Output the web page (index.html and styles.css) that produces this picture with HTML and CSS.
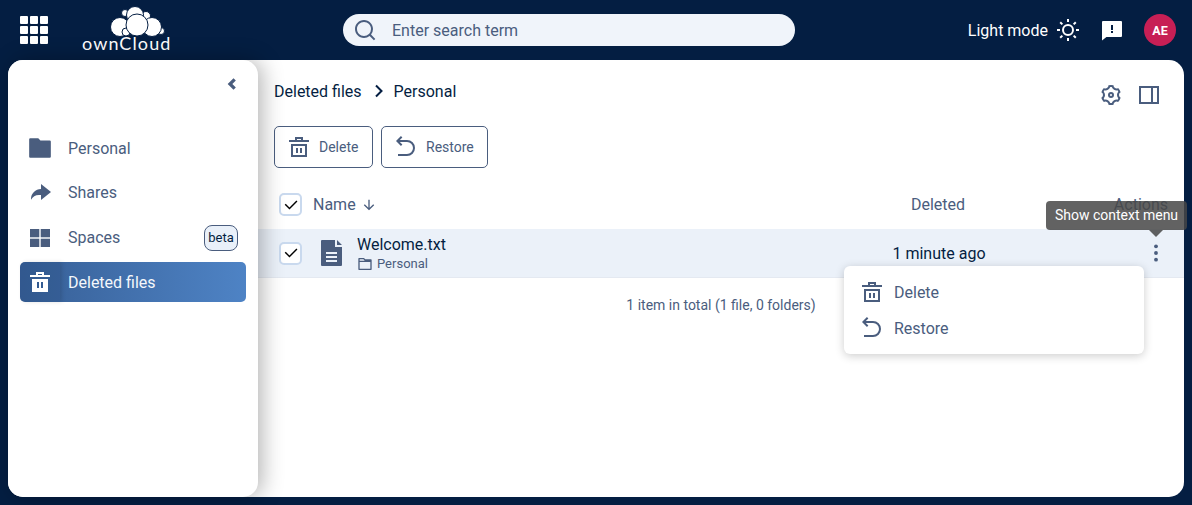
FILE: index.html
```html
<!DOCTYPE html>
<html>

<head>
	<meta name="viewport" content="width=device-width, initial-scale=1" />
	<title>Deleted files - ownCloud</title>
	<link rel="stylesheet" href="styles.css">
</head>

<body>
	<svg class="defs" width="0" height="0">
		<symbol id="trash" viewBox="0 0 20 20">
			<path fill-rule="evenodd" d="M6 0h8v3h6v2H0V3h6zM8 2v1h4V2zM2 7h16v13H2zm2 2v9h12V9zm3 2h2v5H7zm4 0h2v5h-2z"/>
		</symbol>
		<symbol id="restore" viewBox="0 0 24 24">
			<path d="M5.828 7l2.536 2.536L6.95 10.95 2 6l4.95-4.95 1.414 1.414L5.828 5H13a8 8 0 1 1 0 16H4v-2h9a6 6 0 1 0 0-12H5.828z"/>
		</symbol>
		<symbol id="check" viewBox="0 0 24 24">
			<path d="M10 15.17l9.2-9.2 1.4 1.4L10 18l-6.4-6.4 1.4-1.4z"/>
		</symbol>
	</svg>

	<header class="topbar">
		<button class="apps" aria-label="Applications">
			<svg width="28" height="28" viewBox="0 0 28 28">
				<rect x="0" y="0" width="8" height="8" rx="1"/><rect x="10" y="0" width="8" height="8" rx="1"/><rect x="20" y="0" width="8" height="8" rx="1"/>
				<rect x="0" y="10" width="8" height="8" rx="1"/><rect x="10" y="10" width="8" height="8" rx="1"/><rect x="20" y="10" width="8" height="8" rx="1"/>
				<rect x="0" y="20" width="8" height="8" rx="1"/><rect x="10" y="20" width="8" height="8" rx="1"/><rect x="20" y="20" width="8" height="8" rx="1"/>
			</svg>
		</button>
		<a class="logo" href="#">
			<svg class="cloud" width="58" height="32" viewBox="0 0 58 32">
				<g fill="#fff" stroke="#041e42" stroke-width="1">
					<circle cx="16" cy="7" r="3.5"/>
					<circle cx="37" cy="10" r="4.5"/>
					<circle cx="52" cy="25" r="3.5"/>
					<circle cx="26" cy="9" r="8.5"/>
					<circle cx="11" cy="21" r="9.5"/>
					<circle cx="43" cy="21" r="9.5"/>
					<circle cx="17" cy="26" r="4"/>
					<circle cx="28" cy="19" r="11"/>
				</g>
			</svg>
			<span class="wordmark">ownCloud</span>
		</a>
		<div class="search">
			<svg width="24" height="24" viewBox="0 0 24 24"><path d="M18.031 16.617l4.283 4.282-1.415 1.415-4.282-4.283A8.96 8.96 0 0 1 11 20c-4.968 0-9-4.032-9-9s4.032-9 9-9 9 4.032 9 9a8.96 8.96 0 0 1-1.969 5.617zm-2.006-.742A6.977 6.977 0 0 0 18 11c0-3.868-3.133-7-7-7-3.868 0-7 3.132-7 7 0 3.867 3.132 7 7 7a6.977 6.977 0 0 0 4.875-1.975l.15-.15z"/></svg>
			<span>Enter search term</span>
		</div>
		<div class="top-right">
			<span class="mode">Light mode</span>
			<svg class="sun" width="24" height="24" viewBox="0 0 24 24"><path d="M12 18a6 6 0 1 1 0-12 6 6 0 0 1 0 12zm0-2a4 4 0 1 0 0-8 4 4 0 0 0 0 8zM11 1h2v3h-2V1zm0 19h2v3h-2v-3zM3.515 4.929l1.414-1.414L7.05 5.636 5.636 7.05 3.515 4.93zM16.95 18.364l1.414-1.414 2.121 2.121-1.414 1.414-2.121-2.121zm2.121-14.85l1.414 1.415-2.121 2.121-1.414-1.414 2.121-2.121zM5.636 16.95l1.414 1.414-2.121 2.121-1.414-1.414 2.121-2.121zM23 11v2h-3v-2h3zM4 11v2H1v-2h3z"/></svg>
			<svg class="feedback" width="24" height="24" viewBox="0 0 24 24"><path d="M6.455 19L2 22.5V4a1 1 0 0 1 1-1h18a1 1 0 0 1 1 1v14a1 1 0 0 1-1 1H6.455zM11 13v2h2v-2h-2zm0-6v5h2V7h-2z"/></svg>
			<span class="avatar">AE</span>
		</div>
	</header>

	<div class="frame">
		<nav class="sidebar">
			<button class="collapse" aria-label="Collapse">
				<svg width="20" height="20" viewBox="0 0 24 24"><path d="M8 12l7-7 2.8 2.8L13.6 12l4.2 4.2L15 19z"/></svg>
			</button>
			<ul class="nav">
				<li class="nav-item">
					<span class="nav-icon"><svg width="26" height="26" viewBox="0 0 24 24"><path d="M12.414 5H21a1 1 0 0 1 1 1v14a1 1 0 0 1-1 1H3a1 1 0 0 1-1-1V4a1 1 0 0 1 1-1h7.414l2 2z"/></svg></span>
					Personal
				</li>
				<li class="nav-item">
					<span class="nav-icon"><svg width="24" height="24" viewBox="0 0 24 24"><path d="M13 14h-2a8.999 8.999 0 0 0-7.968 4.81A10.136 10.136 0 0 1 3 18C3 12.477 7.477 8 13 8V3l10 8-10 8v-5z"/></svg></span>
					Shares
				</li>
				<li class="nav-item">
					<span class="nav-icon"><svg width="20" height="18" viewBox="0 0 20 18"><rect width="9.3" height="8.3"/><rect x="10.7" width="9.3" height="8.3"/><rect y="9.7" width="9.3" height="8.3"/><rect x="10.7" y="9.7" width="9.3" height="8.3"/></svg></span>
					Spaces
					<span class="beta">beta</span>
				</li>
				<li class="nav-item active">
					<span class="nav-icon"><svg width="20" height="20" viewBox="0 0 20 20"><path fill-rule="evenodd" d="M6 0h8v3h6v2H0V3h6zM8 2v1h4V2zM2 7h16v13H2zm5 3v6h2v-6zm4 0v6h2v-6z"/></svg></span>
					Deleted files
				</li>
			</ul>
		</nav>

		<main class="main">
			<div class="page-head">
				<div class="crumbs">
					<span>Deleted files</span>
					<svg class="crumb-sep" width="12" height="14" viewBox="0 0 12 14"><path d="M2 1.5L7.5 7 2 12.5" fill="none" stroke="currentColor" stroke-width="2"/></svg>
					<span>Personal</span>
				</div>
				<div class="view-tools">
					<svg width="24" height="24" viewBox="0 0 24 24"><path d="M3.34 17a10.018 10.018 0 0 1-.978-2.326 3 3 0 0 0 .002-5.347A9.99 9.99 0 0 1 4.865 4.99a3 3 0 0 0 4.631-2.674 9.99 9.99 0 0 1 5.007.002 3 3 0 0 0 4.632 2.672c.579.59 1.093 1.261 1.525 2.01.433.749.757 1.53.978 2.326a3 3 0 0 0-.002 5.347 9.99 9.99 0 0 1-2.501 4.337 3 3 0 0 0-4.631 2.674 9.99 9.99 0 0 1-5.007-.002 3 3 0 0 0-4.632-2.672A10.018 10.018 0 0 1 3.34 17zm5.66.196a4.993 4.993 0 0 1 2.25 2.77c.499.047 1 .048 1.499.001A4.993 4.993 0 0 1 15 17.197a4.993 4.993 0 0 1 3.525-.565c.29-.408.54-.843.748-1.298A4.993 4.993 0 0 1 18 12c0-1.26.47-2.437 1.273-3.334a8.126 8.126 0 0 0-.75-1.298A4.993 4.993 0 0 1 15 6.804a4.993 4.993 0 0 1-2.25-2.77c-.499-.047-1-.048-1.499-.001A4.993 4.993 0 0 1 9 6.803a4.993 4.993 0 0 1-3.525.565 7.99 7.99 0 0 0-.748 1.298A4.993 4.993 0 0 1 6 12c0 1.26-.47 2.437-1.273 3.334a8.126 8.126 0 0 0 .75 1.298A4.993 4.993 0 0 1 9 17.196zM12 15a3 3 0 1 1 0-6 3 3 0 0 1 0 6zm0-2a1 1 0 1 0 0-2 1 1 0 0 0 0 2z"/></svg>
					<svg width="24" height="24" viewBox="0 0 24 24"><path fill-rule="evenodd" d="M2 3h20v18H2zm2 2v14h10V5zm12 0v14h4V5z"/></svg>
				</div>
			</div>

			<div class="bulk">
				<button class="btn"><svg width="20" height="20"><use href="#trash"/></svg>Delete</button>
				<button class="btn"><svg width="24" height="24"><use href="#restore"/></svg>Restore</button>
			</div>

			<div class="row table-head">
				<span class="name-cell">
					<span class="check"><svg width="18" height="18"><use href="#check"/></svg></span>
					<span class="sort">Name <svg width="16" height="16" viewBox="0 0 24 24"><path d="M13 16.172l5.364-5.364 1.414 1.414L12 20l-7.778-7.778 1.414-1.414L11 16.172V4h2z"/></svg></span>
				</span>
				<span class="deleted-cell">Deleted</span>
				<span class="actions-cell">Actions</span>
			</div>

			<div class="row file-row">
				<span class="name-cell">
					<span class="check"><svg width="18" height="18"><use href="#check"/></svg></span>
					<svg class="file-icon" width="21" height="26" viewBox="0 0 21 26"><path fill-rule="evenodd" d="M1 0h13v7h7v18a1 1 0 0 1-1 1H1a1 1 0 0 1-1-1V1a1 1 0 0 1 1-1zm15 0l5 5h-5zM5 12v2h11v-2zm0 4v2h11v-2zm0 4v2h11v-2z"/></svg>
					<span class="file-text">
						<span class="file-name">Welcome.txt</span>
						<span class="file-path">
							<svg width="16" height="16" viewBox="0 0 24 24"><path d="M4 5v14h16V9H4V7h7.586l-2-2H4zm8.414 0H21a1 1 0 0 1 1 1v14a1 1 0 0 1-1 1H3a1 1 0 0 1-1-1V4a1 1 0 0 1 1-1h7.414l2 2z"/></svg>
							Personal
						</span>
					</span>
				</span>
				<span class="deleted-cell time">1 minute ago</span>
				<span class="actions-cell">
					<svg class="kebab" width="24" height="24" viewBox="0 0 24 24"><circle cx="12" cy="4" r="2.3"/><circle cx="12" cy="12" r="2.3"/><circle cx="12" cy="20" r="2.3"/></svg>
				</span>
			</div>

			<p class="total">1 item in total (1 file, 0 folders)</p>

			<div class="tooltip">Show context menu</div>

			<ul class="menu">
				<li><svg width="20" height="20"><use href="#trash"/></svg>Delete</li>
				<li><svg width="24" height="24"><use href="#restore"/></svg>Restore</li>
			</ul>
		</main>
	</div>
</body>

</html>
```

FILE: styles.css
```css
* {
	box-sizing: border-box;
}

html,
body {
	height: 100%;
	margin: 0;
}

body {
	display: flex;
	flex-direction: column;
	background: #041e42;
	color: #041e42;
	font-family: Roboto, "Liberation Sans", sans-serif;
	font-size: 16px;
	overflow: hidden;
}

svg {
	fill: currentColor;
	flex: none;
}

button {
	border: 0;
	padding: 0;
	background: none;
	font: inherit;
	color: inherit;
}

ul {
	list-style: none;
	margin: 0;
	padding: 0;
}

.defs {
	position: absolute;
}

/* top bar */
.topbar {
	display: flex;
	align-items: center;
	flex: none;
	height: 60px;
	padding: 0 16px 0 20px;
	color: #fff;
}

.apps {
	display: flex;
	margin-right: 34px;
}

.apps svg {
	fill: #fff;
}

.logo {
	display: flex;
	flex-direction: column;
	align-self: flex-start;
	width: 89px;
	margin-top: 6px;
	color: #fff;
	text-decoration: none;
}

.cloud {
	margin-left: 27px;
}

.wordmark {
	margin-top: -2px;
	font-family: Lato, sans-serif;
	font-weight: 400;
	font-size: 18px;
	line-height: 14px;
	letter-spacing: 1.1px;
	white-space: nowrap;
}

.search {
	display: flex;
	align-items: center;
	gap: 15px;
	width: 452px;
	height: 32px;
	margin-left: 172px;
	padding-left: 10px;
	border-radius: 16px;
	background: #f0f4fa;
	color: #4a5d7e;
}

.top-right {
	display: flex;
	align-items: center;
	margin-left: auto;
}

.sun {
	margin-left: 8px;
}

.feedback {
	margin-left: 20px;
}

.avatar {
	display: flex;
	align-items: center;
	justify-content: center;
	width: 32px;
	height: 32px;
	margin-left: 20px;
	border-radius: 50%;
	background: #c71f55;
	font-size: 12.5px;
	font-weight: 700;
}

/* page frame */
.frame {
	display: flex;
	flex: 1;
	min-height: 0;
	margin: 0 8px 8px;
	border-radius: 15px;
	background: #fff;
}

.sidebar {
	position: relative;
	z-index: 1;
	flex: none;
	width: 250px;
	padding: 14px 12px 0;
	border-radius: 15px;
	background: #fff;
	color: #4a5d7e;
	box-shadow: 4px 0 22px rgba(0, 0, 0, 0.3);
}

.collapse {
	display: block;
	height: 24px;
	margin-left: 201px;
}

.nav {
	display: flex;
	flex-direction: column;
	gap: 4.8px;
	margin-top: 30px;
}

.nav-item {
	display: flex;
	align-items: center;
	height: 40px;
	padding-right: 8px;
	border-radius: 5px;
}

.nav-icon {
	display: flex;
	align-items: center;
	justify-content: center;
	flex: none;
	width: 40px;
	height: 40px;
	margin-right: 8px;
	border-radius: 5px 0 0 5px;
}

.beta {
	margin-left: auto;
	height: 26px;
	width: 34px;
	border: 1px solid #4a5d7e;
	border-radius: 8px;
	background: #e9f0f9;
	color: #041e42;
	font-size: 13px;
	line-height: 24px;
	text-align: center;
}

.active {
	background: linear-gradient(90deg, #375f96, #4e83c5);
	color: #f4f7fb;
}

.active .nav-icon {
	background: rgba(30, 60, 110, 0.18);
	box-shadow: 2px 0 4px rgba(0, 0, 0, 0.12);
	color: #fff;
}

/* main column */
.main {
	position: relative;
	flex: 1;
	min-width: 0;
}

.page-head {
	display: flex;
	justify-content: space-between;
	height: 66px;
	padding: 19px 23px 0 16px;
}

.crumbs {
	display: flex;
	align-items: center;
	height: 24px;
}

.crumb-sep {
	margin: 0 8px 0 12px;
}

.view-tools {
	display: flex;
	gap: 14px;
	margin-top: 4px;
	color: #4a5d7e;
}

.bulk {
	display: flex;
	gap: 8px;
	padding-left: 16px;
}

.btn {
	display: flex;
	align-items: center;
	gap: 10px;
	width: 99px;
	height: 42px;
	padding-left: 14px;
	border: 1px solid #4a5d7e;
	border-radius: 5px;
	color: #4a5d7e;
	font-size: 14px;
}

.btn:last-child {
	gap: 8px;
	width: 107px;
	padding-left: 12px;
}

.row {
	display: grid;
	grid-template-columns: 1fr 200px 130px;
	align-items: center;
	padding: 0 16px 0 21px;
}

.table-head {
	height: 49px;
	margin-top: 12px;
	color: #4a5d7e;
}

.file-row {
	height: 49px;
	border-bottom: 1px solid #e4e9f1;
	background: #ebf1f9;
}

.name-cell {
	display: flex;
	align-items: center;
}

.check {
	display: flex;
	align-items: center;
	justify-content: center;
	width: 23px;
	height: 23px;
	border: 2px solid #c9d9ee;
	border-radius: 5px;
	background: #fff;
	color: #000;
}

.sort {
	display: flex;
	align-items: center;
	gap: 5px;
	margin-left: 11px;
}

.file-icon {
	margin-left: 19px;
	color: #4a5d7e;
}

.file-text {
	display: flex;
	flex-direction: column;
	margin-left: 15px;
}

.file-name {
	line-height: 20px;
	margin-top: 2px;
}

.file-path {
	display: flex;
	align-items: center;
	gap: 4px;
	color: #4a5d7e;
	font-size: 13px;
	line-height: 18px;
}

.deleted-cell {
	text-align: center;
}

.time {
	padding-left: 2px;
}

.actions-cell {
	display: flex;
	justify-content: flex-end;
}

.kebab {
	width: 24px;
	height: 20px;
	color: #4a5d7e;
}

.total {
	margin: 18px 0 0;
	color: #4a5d7e;
	font-size: 14px;
	line-height: 18px;
	text-align: center;
}

.tooltip {
	position: absolute;
	top: 141px;
	right: -3px;
	width: 141px;
	height: 29px;
	border-radius: 4px;
	background: rgba(70, 70, 70, 0.85);
	color: #fff;
	font-size: 14px;
	line-height: 28px;
	text-align: center;
	white-space: nowrap;
}

.tooltip::after {
	content: "";
	position: absolute;
	top: 29px;
	left: 103px;
	border: 7px solid transparent;
	border-top-color: rgba(70, 70, 70, 0.85);
	border-bottom: 0;
}

.menu {
	position: absolute;
	top: 206px;
	right: 40px;
	width: 300px;
	height: 88px;
	padding: 8px 18px;
	border-radius: 6px;
	background: #fff;
	color: #4a5d7e;
	box-shadow: 0 2px 10px rgba(0, 0, 0, 0.2);
}

.menu li {
	display: flex;
	align-items: center;
	gap: 12px;
	height: 36px;
}

.menu li:last-child {
	gap: 10px;
	margin-left: -2px;
}
```
